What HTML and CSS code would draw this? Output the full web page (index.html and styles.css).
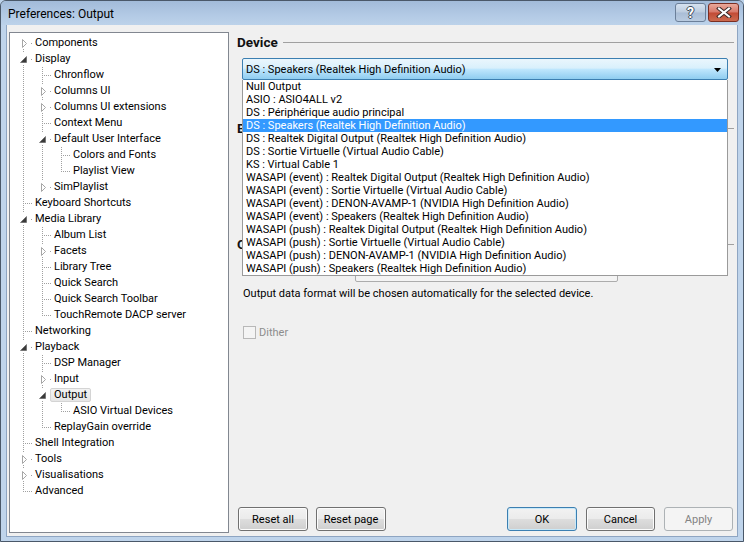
FILE: index.html
```html
<!DOCTYPE html>
<html>
<head>
<meta charset="utf-8">
<title>Preferences: Output</title>
<link rel="stylesheet" href="styles.css">
</head>
<body>
<div class="window">
  <div class="titlebar">
    <span class="title">Preferences: Output</span>
    <div class="caption-btns">
      <div class="cbtn help">?</div>
      <div class="cbtn close">
        <svg width="16" height="11" viewBox="0 0 16 11"><path d="M3 1.5 L13 9.5 M13 1.5 L3 9.5" stroke="#3a2a28" stroke-width="4" stroke-linecap="square"/><path d="M3 1.5 L13 9.5 M13 1.5 L3 9.5" stroke="#ffffff" stroke-width="2" stroke-linecap="square"/></svg>
      </div>
    </div>
  </div>
  <div class="client">
    <div class="tree">
      <div class="row"><i class="n first"><svg class="exp" width="14" height="16"><rect x="0" y="2" width="11" height="12" fill="#fff"/><path d="M3.5 4.5 L7.5 8.5 L3.5 12.5 Z" fill="#fff" stroke="#a6a6a6"/></svg></i><span class="t">Components</span></div>
      <div class="row"><i class="n mid"><svg class="exp" width="14" height="16"><rect x="0" y="2" width="11" height="12" fill="#fff"/><path d="M7.5 5.5 L7.5 11.5 L1.5 11.5 Z" fill="#3a3a3a" stroke="#5a5a5a" stroke-width="0.6"/></svg></i><span class="t">Display</span></div>
      <div class="row"><i class="a v"></i><i class="n mid"></i><span class="t">Chronflow</span></div>
      <div class="row"><i class="a v"></i><i class="n mid"><svg class="exp" width="14" height="16"><rect x="0" y="2" width="11" height="12" fill="#fff"/><path d="M3.5 4.5 L7.5 8.5 L3.5 12.5 Z" fill="#fff" stroke="#a6a6a6"/></svg></i><span class="t">Columns UI</span></div>
      <div class="row"><i class="a v"></i><i class="n mid"><svg class="exp" width="14" height="16"><rect x="0" y="2" width="11" height="12" fill="#fff"/><path d="M3.5 4.5 L7.5 8.5 L3.5 12.5 Z" fill="#fff" stroke="#a6a6a6"/></svg></i><span class="t">Columns UI extensions</span></div>
      <div class="row"><i class="a v"></i><i class="n mid"></i><span class="t">Context Menu</span></div>
      <div class="row"><i class="a v"></i><i class="n mid"><svg class="exp" width="14" height="16"><rect x="0" y="2" width="11" height="12" fill="#fff"/><path d="M7.5 5.5 L7.5 11.5 L1.5 11.5 Z" fill="#3a3a3a" stroke="#5a5a5a" stroke-width="0.6"/></svg></i><span class="t">Default User Interface</span></div>
      <div class="row"><i class="a v"></i><i class="a v"></i><i class="n mid"></i><span class="t">Colors and Fonts</span></div>
      <div class="row"><i class="a v"></i><i class="a v"></i><i class="n last"></i><span class="t">Playlist View</span></div>
      <div class="row"><i class="a v"></i><i class="n last"><svg class="exp" width="14" height="16"><rect x="0" y="2" width="11" height="12" fill="#fff"/><path d="M3.5 4.5 L7.5 8.5 L3.5 12.5 Z" fill="#fff" stroke="#a6a6a6"/></svg></i><span class="t">SimPlaylist</span></div>
      <div class="row"><i class="n mid"></i><span class="t">Keyboard Shortcuts</span></div>
      <div class="row"><i class="n mid"><svg class="exp" width="14" height="16"><rect x="0" y="2" width="11" height="12" fill="#fff"/><path d="M7.5 5.5 L7.5 11.5 L1.5 11.5 Z" fill="#3a3a3a" stroke="#5a5a5a" stroke-width="0.6"/></svg></i><span class="t">Media Library</span></div>
      <div class="row"><i class="a v"></i><i class="n mid"></i><span class="t">Album List</span></div>
      <div class="row"><i class="a v"></i><i class="n mid"><svg class="exp" width="14" height="16"><rect x="0" y="2" width="11" height="12" fill="#fff"/><path d="M3.5 4.5 L7.5 8.5 L3.5 12.5 Z" fill="#fff" stroke="#a6a6a6"/></svg></i><span class="t">Facets</span></div>
      <div class="row"><i class="a v"></i><i class="n mid"></i><span class="t">Library Tree</span></div>
      <div class="row"><i class="a v"></i><i class="n mid"></i><span class="t">Quick Search</span></div>
      <div class="row"><i class="a v"></i><i class="n mid"></i><span class="t">Quick Search Toolbar</span></div>
      <div class="row"><i class="a v"></i><i class="n last"></i><span class="t">TouchRemote DACP server</span></div>
      <div class="row"><i class="n mid"></i><span class="t">Networking</span></div>
      <div class="row"><i class="n mid"><svg class="exp" width="14" height="16"><rect x="0" y="2" width="11" height="12" fill="#fff"/><path d="M7.5 5.5 L7.5 11.5 L1.5 11.5 Z" fill="#3a3a3a" stroke="#5a5a5a" stroke-width="0.6"/></svg></i><span class="t">Playback</span></div>
      <div class="row"><i class="a v"></i><i class="n mid"></i><span class="t">DSP Manager</span></div>
      <div class="row"><i class="a v"></i><i class="n mid"><svg class="exp" width="14" height="16"><rect x="0" y="2" width="11" height="12" fill="#fff"/><path d="M3.5 4.5 L7.5 8.5 L3.5 12.5 Z" fill="#fff" stroke="#a6a6a6"/></svg></i><span class="t">Input</span></div>
      <div class="row"><i class="a v"></i><i class="n mid"><svg class="exp" width="14" height="16"><rect x="0" y="2" width="11" height="12" fill="#fff"/><path d="M7.5 5.5 L7.5 11.5 L1.5 11.5 Z" fill="#3a3a3a" stroke="#5a5a5a" stroke-width="0.6"/></svg></i><span class="t sel">Output</span></div>
      <div class="row"><i class="a v"></i><i class="a v"></i><i class="n last"></i><span class="t">ASIO Virtual Devices</span></div>
      <div class="row"><i class="a v"></i><i class="n last"></i><span class="t">ReplayGain override</span></div>
      <div class="row"><i class="n mid"></i><span class="t">Shell Integration</span></div>
      <div class="row"><i class="n mid"><svg class="exp" width="14" height="16"><rect x="0" y="2" width="11" height="12" fill="#fff"/><path d="M3.5 4.5 L7.5 8.5 L3.5 12.5 Z" fill="#fff" stroke="#a6a6a6"/></svg></i><span class="t">Tools</span></div>
      <div class="row"><i class="n mid"><svg class="exp" width="14" height="16"><rect x="0" y="2" width="11" height="12" fill="#fff"/><path d="M3.5 4.5 L7.5 8.5 L3.5 12.5 Z" fill="#fff" stroke="#a6a6a6"/></svg></i><span class="t">Visualisations</span></div>
      <div class="row"><i class="n last"></i><span class="t">Advanced</span></div>
    </div>

    <div class="page">
      <div class="group-head"><span>Device</span><i class="rule"></i></div>
      <div class="combo-wrap">
        <div class="combo">
          <span>DS : Speakers (Realtek High Definition Audio)</span>
          <svg class="arrow" width="7" height="4" viewBox="0 0 7 4"><path d="M0 0 H7 L3.5 4 Z" fill="#000"/></svg>
        </div>
        <ul class="droplist">
          <li>Null Output</li>
          <li>ASIO : ASIO4ALL v2</li>
          <li>DS : Périphérique audio principal</li>
          <li class="hl">DS : Speakers (Realtek High Definition Audio)</li>
          <li>DS : Realtek Digital Output (Realtek High Definition Audio)</li>
          <li>DS : Sortie Virtuelle (Virtual Audio Cable)</li>
          <li>KS : Virtual Cable 1</li>
          <li>WASAPI (event) : Realtek Digital Output (Realtek High Definition Audio)</li>
          <li>WASAPI (event) : Sortie Virtuelle (Virtual Audio Cable)</li>
          <li>WASAPI (event) : DENON-AVAMP-1 (NVIDIA High Definition Audio)</li>
          <li>WASAPI (event) : Speakers (Realtek High Definition Audio)</li>
          <li>WASAPI (push) : Realtek Digital Output (Realtek High Definition Audio)</li>
          <li>WASAPI (push) : Sortie Virtuelle (Virtual Audio Cable)</li>
          <li>WASAPI (push) : DENON-AVAMP-1 (NVIDIA High Definition Audio)</li>
          <li>WASAPI (push) : Speakers (Realtek High Definition Audio)</li>
        </ul>
      </div>

      <div class="group-head buffer"><span>Buffer length</span><i class="rule"></i></div>

      <div class="group-head format"><span>Output format</span><i class="rule"></i></div>
      <div class="format-box"></div>
      <p class="note">Output data format will be chosen automatically for the selected device.</p>
      <label class="check"><i class="box"></i><span>Dither</span></label>

      <div class="buttons">
        <div class="btn">Reset all</div>
        <div class="btn">Reset page</div>
        <div class="spacer"></div>
        <div class="btn default">OK</div>
        <div class="btn narrow">Cancel</div>
        <div class="btn narrow disabled">Apply</div>
      </div>
    </div>
  </div>
</div>
</body>
</html>
```
FILE: styles.css
```css
* { box-sizing: border-box; }
html, body { margin: 0; padding: 0; }
body {
  width: 744px;
  height: 542px;
  overflow: hidden;
  font-family: Roboto, "Liberation Sans", sans-serif;
  font-size: 11px;
  color: #000;
  background: #bcd2ea;
}

.window {
  width: 744px;
  height: 542px;
  border: 1px solid #4a5869;
  border-radius: 6px 6px 0 0;
  background: #bfd4eb;
  display: flex;
  flex-direction: column;
}

.titlebar {
  height: 24px;
  flex: none;
  display: flex;
  align-items: center;
  padding-left: 7px;
  background: linear-gradient(#a2bbd9, #b3cae5 60%, #bcd2ea);
  border-radius: 5px 5px 0 0;
}
.title { font-size: 12px; color: #000; padding-top: 2px; }
.caption-btns {
  margin-left: auto;
  margin-right: 4px;
  display: flex;
  gap: 2px;
  align-self: flex-start;
  margin-top: 2px;
}
.cbtn {
  height: 19px;
  border-radius: 3px;
  display: flex;
  align-items: center;
  justify-content: center;
}
.help {
  width: 31px;
  border: 1px solid #6b7f99;
  background: linear-gradient(#d6e2f0, #bcccdf 48%, #a9bdd6 52%, #b9cbe0);
  color: #fff;
  font-weight: bold;
  font-size: 14px;
  text-shadow: 1px 0 #3f4c5c, -1px 0 #3f4c5c, 0 1px #3f4c5c, 0 -1px #3f4c5c;
}
.close {
  width: 31px;
  border: 1px solid #7a2e22;
  background: linear-gradient(#e9a99a, #d7786a 48%, #c24a35 52%, #cc6a4f);
}

.client {
  flex: 1;
  margin: 0 5px 4px 5px;
  border: 1px solid #8ea5c2;
  border-top: none;
  background: #f0f0f0;
  display: flex;
  padding: 7px 1px 0 2px;
  gap: 8px;
}

/* tree */
.tree {
  width: 220px;
  height: 501px;
  flex: none;
  border: 1px solid #828790;
  background: #fff;
  padding: 2px 0 0 9px;
}
.row {
  height: 16px;
  display: flex;
  align-items: center;
  white-space: nowrap;
}
.a { display: block; width: 19px; height: 16px; flex: none; }
.a.v {
  background: repeating-linear-gradient(to bottom, #a0a0a0 0 1px, transparent 1px 2px) 4px 0 / 1px 16px no-repeat;
}
.n { display: block; width: 14px; height: 16px; flex: none; }
.n.mid {
  background:
    repeating-linear-gradient(to bottom, #a0a0a0 0 1px, transparent 1px 2px) 4px 0 / 1px 16px no-repeat,
    repeating-linear-gradient(to right, #a0a0a0 0 1px, transparent 1px 2px) 6px 8px / 8px 1px no-repeat;
}
.n.last {
  background:
    repeating-linear-gradient(to bottom, #a0a0a0 0 1px, transparent 1px 2px) 4px 0 / 1px 9px no-repeat,
    repeating-linear-gradient(to right, #a0a0a0 0 1px, transparent 1px 2px) 6px 8px / 8px 1px no-repeat;
}
.n.first {
  background:
    repeating-linear-gradient(to bottom, #a0a0a0 0 1px, transparent 1px 2px) 4px 8px / 1px 8px no-repeat,
    repeating-linear-gradient(to right, #a0a0a0 0 1px, transparent 1px 2px) 6px 8px / 8px 1px no-repeat;
}
.exp { display: block; }
.t {
  padding: 0 3px 0 2px;
  line-height: 14px;
}
.t.sel {
  margin-left: -2px;
  padding: 0 3px 0 3px;
  line-height: 12px;
  border: 1px solid #d4d4d4;
  border-radius: 2px;
  background: linear-gradient(#f2f2f2, #e6e6e6);
}

/* page */
.page {
  flex: 1;
  height: 501px;
  display: flex;
  flex-direction: column;
  padding-right: 1px;
}
.group-head {
  height: 20px;
  flex: none;
  display: flex;
  align-items: center;
  font-size: 13.5px;
  font-weight: bold;
  color: #111;
}
.group-head .rule {
  flex: 1;
  height: 1px;
  margin: 1px 1px 0 5px;
  background: #a0a0a0;
}
.combo-wrap {
  position: relative;
  margin: 6px 7px 0 5px;
  flex: none;
}
.combo {
  height: 22px;
  border: 1px solid #3c7fb1;
  border-radius: 2px;
  background: linear-gradient(#eaf6fd, #d9f0fc 45%, #bee6fd 52%, #8fcdf0);
  display: flex;
  align-items: center;
  padding: 0 6px 0 3px;
}
.combo .arrow { margin-left: auto; margin-top: 1px; }
.droplist {
  position: absolute;
  top: 100%;
  left: 0;
  right: 0;
  z-index: 5;
  margin: 0;
  padding: 0;
  list-style: none;
  background: #fff;
  border: 1px solid #9a9a9a;
  border-top: none;
}
.droplist li {
  height: 13px;
  line-height: 14px;
  padding-left: 3px;
  white-space: nowrap;
}
.droplist li.hl { background: #3399ff; color: #fff; }

.group-head.buffer { margin-top: 38px; }
.group-head.format { margin-top: 96px; }
.format-box {
  margin: 6px 0 0 118px;
  width: 263px;
  height: 22px;
  border: 1px solid #acacac;
  border-radius: 2px;
  background: #f4f4f4;
  flex: none;
}
.note {
  margin: 5px 0 0 6px;
  line-height: 14px;
}
.check {
  margin: 25px 0 0 6px;
  display: flex;
  align-items: center;
  gap: 3px;
  color: #8d8d8d;
}
.check .box {
  width: 13px;
  height: 13px;
  border: 1px solid #b8b8b8;
  background: #f4f4f4;
}

.buttons {
  margin-top: auto;
  margin-bottom: 2px;
  display: flex;
  gap: 9px;
  padding: 0 2px 0 1px;
}
.buttons .btn:nth-child(2) { margin-left: -1px; }
.spacer { flex: 1; }
.btn {
  width: 70px;
  flex: none;
  height: 24px;
  border: 1px solid #707070;
  border-radius: 3px;
  background: linear-gradient(#f2f2f2, #ebebeb 48%, #dddddd 52%, #cfcfcf);
  box-shadow: inset 0 0 0 1px #fcfcfc;
  display: flex;
  align-items: center;
  justify-content: center;
}
.btn.narrow { width: 69px; }
.btn.default {
  border-color: #3c7fb1;
  box-shadow: inset 0 0 0 1px #c8e9f9;
}
.btn.disabled {
  border-color: #adb2b5;
  background: #f4f4f4;
  box-shadow: none;
  color: #838383;
}
```
